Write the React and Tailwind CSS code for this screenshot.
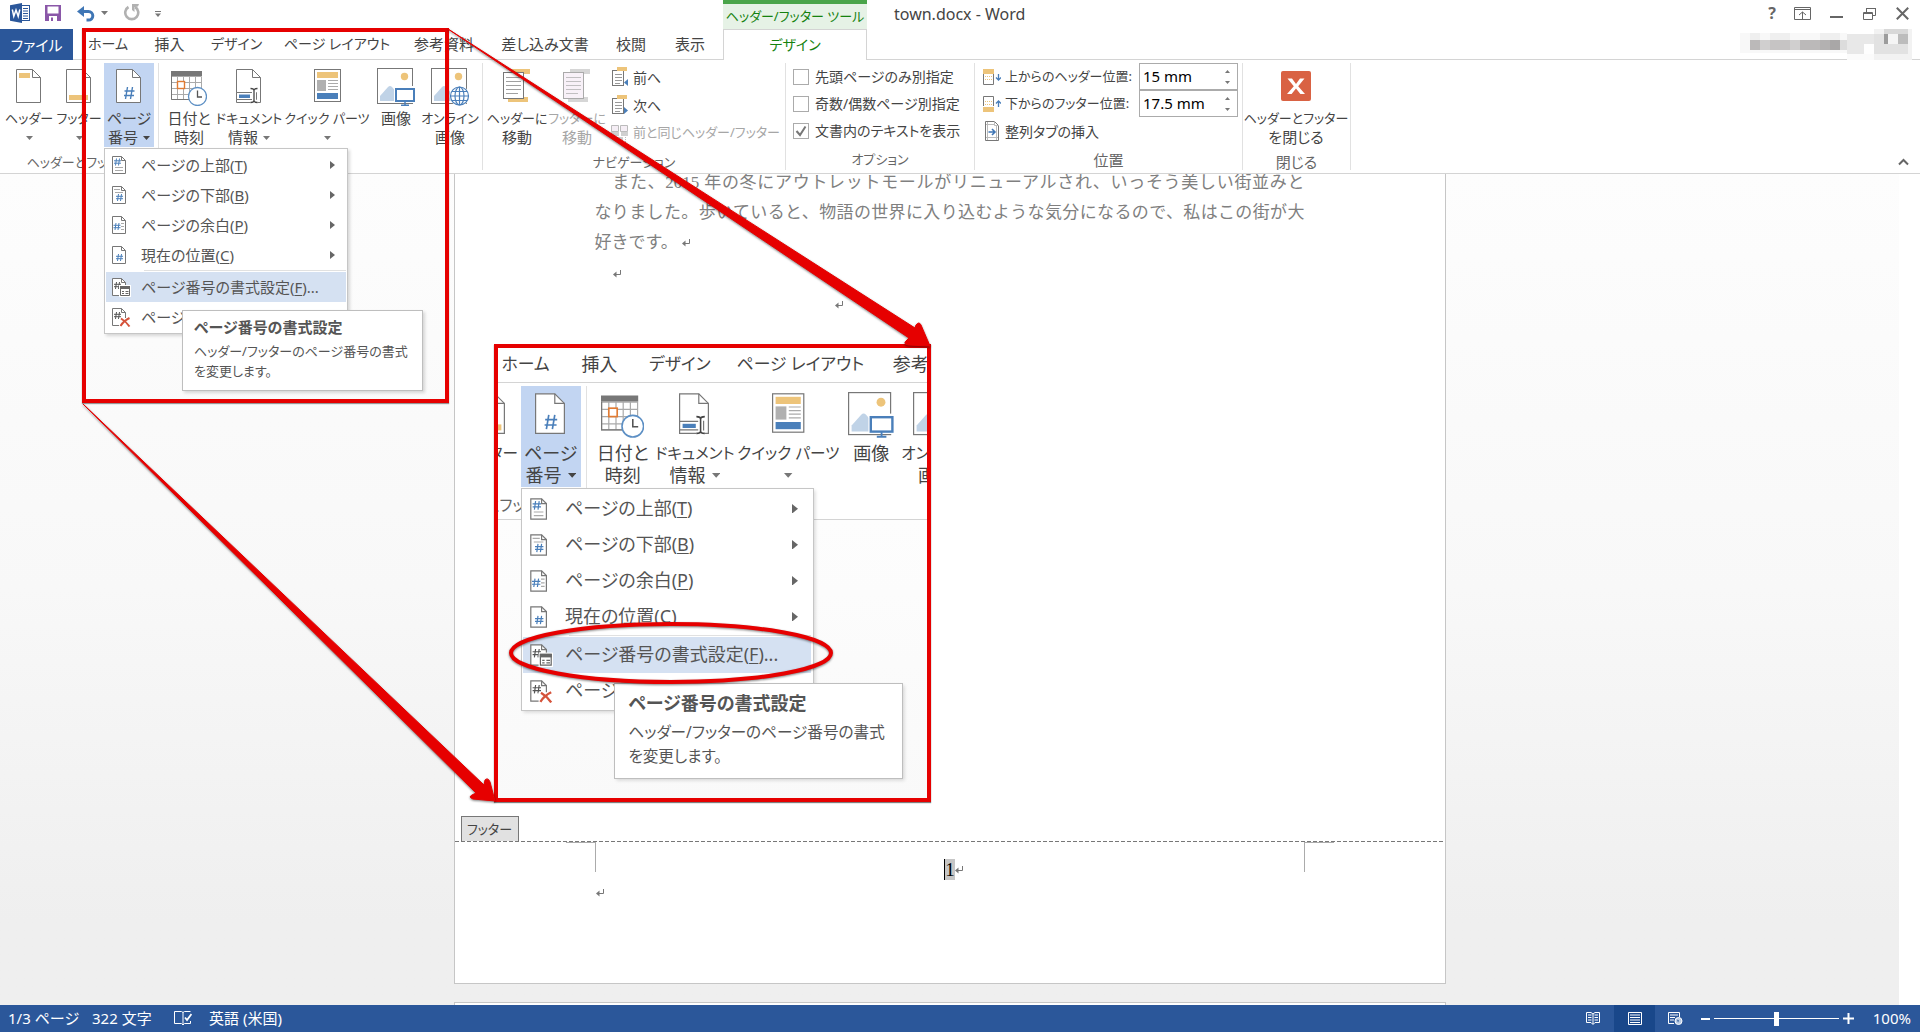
import React from "react";

const Caret = ({ className = "text-[#666]" }) => (
  <svg width="7" height="4" viewBox="0 0 7 4" className={className} aria-hidden="true">
    <path d="M0 0h7L3.5 4z" fill="currentColor" />
  </svg>
);

/* ---------- title bar icons ---------- */
const WordLogo = () => (
  <svg width="20" height="20" viewBox="0 0 20 20" aria-hidden="true">
    <rect x="9" y="2.5" width="10.5" height="15" fill="#fff" stroke="#2b579a" />
    <path d="M13 5.5h5M13 8h5M13 10.500h5M13 13h5M13 15.500h5" stroke="#2b579a" />
    <path d="M0 2.200 12 0v20L0 17.800z" fill="#2b579a" />
    <path d="M2.300 6.500 3.800 13.300 6 7l2.200 6.300L9.800 6.500" fill="none" stroke="#fff" strokeWidth="1.500" />
  </svg>
);
const SaveIcon = () => (
  <svg width="16" height="16" viewBox="0 0 16 16" aria-hidden="true">
    <path d="M0 0h16v16H0z" fill="#8a57a8" />
    <path d="M2.500 1.500h11v7h-11z" fill="#fff" />
    <path d="M4 11h8v5H4z" fill="#fff" />
    <path d="M6 12.500h2V16H6z" fill="#8a57a8" />
  </svg>
);
const UndoIcon = () => (
  <svg width="18" height="16" viewBox="0 0 18 16" aria-hidden="true">
    <path d="M7 0 0 5.500 7 11V7.500" fill="#3f76b5" />
    <path d="M4 5.500h7.500a4.300 4.300 0 0 1 0 8.600H9.500" fill="none" stroke="#3f76b5" strokeWidth="3" />
  </svg>
);
const RedoIcon = () => (
  <svg width="17" height="17" viewBox="0 0 17 17" aria-hidden="true">
    <path d="M5.500 3A6.500 6.500 0 1 0 12 3" fill="none" stroke="#b1b1b1" strokeWidth="2.600" />
    <path d="M9 0h7l-1 2.500-3.500.5V8L9 6z" fill="#b1b1b1" />
  </svg>
);

/* ---------- large ribbon icons ---------- */
const Sheet = ({ children }) => (
  <svg width="26" height="38" viewBox="0 0 26 38" aria-hidden="true">
    <path d="M.5 1.500h16l8 8v25H.5z" fill="#fff" stroke="#777" />
    <path d="M16.500 1.500v8h8" fill="none" stroke="#777" />
    {children}
  </svg>
);
const HeaderIcon = () => <Sheet><path d="M3 5h11v5H3z" fill="#edc47a" /></Sheet>;
const FooterIcon = () => <Sheet><path d="M3 27h19v5H3z" fill="#edc47a" /></Sheet>;
const PageNumberIcon = () => (
  <Sheet><path d="M11.500 19 9.500 31M16.500 19 14.500 31M8.500 23h10M8 27.500h10" stroke="#4a7fba" strokeWidth="1.400" /></Sheet>
);
const DateIcon = () => (
  <svg width="36" height="38" viewBox="0 0 36 38" aria-hidden="true">
    <path d="M.5 8.500h30v23H.5zM6.500 8v23M12.500 8v23M18.500 8v23M24.500 8v23M.5 14.500h30M.5 20.500h30M.5 26.500h30" fill="#fff" stroke="#aaa" />
    <path d="M0 3h31v5H0z" fill="#777" />
    <path d="M.5 8v23.500H19" fill="none" stroke="#777" />
    <rect x="6.500" y="13.500" width="7" height="7" fill="#fff" stroke="#e07b33" strokeWidth="1.400" />
    <circle cx="26.500" cy="28.500" r="9" fill="#fff" stroke="#5c8fc4" strokeWidth="1.300" />
    <path d="M26.500 22.500v6.500H31" fill="none" stroke="#555" strokeWidth="1.300" />
  </svg>
);
const DocInfoIcon = () => (
  <Sheet>
    <path d="M.5 24.500h20v7H.5z" fill="#fff" stroke="#777" />
    <path d="M3 26.500h11v3.500H3z" fill="#4a7fba" />
    <path d="M14.500 20.500q3.500 0 3.500 2v10q0 2-3.500 2M21.500 20.500q-3.500 0-3.500 2v10q0 2 3.500 2" fill="none" stroke="#fff" strokeWidth="4" />
    <path d="M14.500 20.500q3.500 0 3.500 2v10q0 2-3.500 2M21.500 20.500q-3.500 0-3.500 2v10q0 2 3.500 2" fill="none" stroke="#444" strokeWidth="1.300" />
  </Sheet>
);
const QuickPartsIcon = () => (
  <svg width="27" height="38" viewBox="0 0 27 38" aria-hidden="true">
    <rect x=".5" y="1.500" width="26" height="32" fill="#fff" stroke="#777" />
    <path d="M3 4h21v6H3z" fill="#edc47a" />
    <path d="M3 12h9v11H3z" fill="#b0b0b0" />
    <path d="M14 12.500h10M14 15.500h10M14 18.500h10M14 21.500h10" stroke="#aaa" />
    <path d="M3 25h21v6H3z" fill="#4a7fba" />
  </svg>
);
const Picture = ({ children }) => (
  <svg width="39" height="38" viewBox="0 0 39 38" aria-hidden="true">
    <rect x=".5" y=".5" width="35" height="35" fill="#fff" stroke="#777" />
    <circle cx="27.500" cy="8.500" r="3.700" fill="#edc47a" />
    <path d="M3 33V28L11 19q2-2 4 0l8 9v5z" fill="#c0d3e7" />
    {children}
  </svg>
);
const ImageIcon = () => (
  <Picture>
    <path d="M17 18h22v17H17z" fill="#fff" />
    <rect x="19" y="21" width="18" height="12" fill="#fff" stroke="#4a7fba" strokeWidth="2" />
    <path d="M28 33v4M24 37.300h8" stroke="#4a7fba" strokeWidth="1.500" />
  </Picture>
);
const OnlineImageIcon = () => (
  <Picture>
    <circle cx="28.500" cy="28" r="10" fill="#fff" />
    <g fill="none" stroke="#4a7fba" strokeWidth="1.200">
      <circle cx="28.500" cy="28" r="9" />
      <ellipse cx="28.500" cy="28" rx="4.500" ry="9" />
      <path d="M28.500 19v18M19.500 28h18M21 23.500h15M21 32.500h15" />
    </g>
  </Picture>
);
const MoveIcon = ({ paper = "#fff", line = "#777", accent = "#edc47a", flip = false }) => (
  <svg width="28" height="38" viewBox="0 0 28 38" aria-hidden="true">
    <path d={flip ? "M7 1h20v5H7z" : "M9 1h18v5H9z"} fill={accent} />
    <path d="M5 29h20v5H5z" fill={accent} />
    <rect x=".5" y="4.500" width="20" height="26" fill={paper} stroke={line} />
    <path d="M3 9.500h15M3 13.500h15M3 17.500h15M3 21.500h15M3 25.500h12" stroke={line} strokeOpacity=".7" />
  </svg>
);
const CloseHeaderIcon = () => (
  <svg width="30" height="38" viewBox="0 0 30 38" aria-hidden="true">
    <rect y="3" width="30" height="30" rx="2" fill="#d96243" />
    <path d="M6.500 10.500h4.500L15 16l4-5.500h4.500L17.200 18.300 24 26h-4.600L15 20.500 10.600 26H6l6.800-7.700z" fill="#fff" />
  </svg>
);

/* ---------- small icons ---------- */
const StepIcon = ({ next }) => (
  <svg width="18" height="20" viewBox="0 0 18 20" className="shrink-0" aria-hidden="true">
    <rect x="1.500" y="3.500" width="11" height="15" fill="#fff" stroke="#777" />
    <path d="M4 7.500h7M4 10.500h7M4 13.500h7M4 16.500h5" stroke="#999" />
    <path d="M6 0h10v4H6z" fill="#edc47a" />
    <path d={next ? "M13 12v7l4-3.500z" : "M17 12v7l-4-3.500z"} fill="#4a7fba" />
  </svg>
);
const LinkPrevIcon = () => (
  <svg width="18" height="20" viewBox="0 0 18 20" className="shrink-0" aria-hidden="true">
    <path d="M.5 2.500h7v6h-7zM9.500 2.500h7v6h-7z" fill="#f5eef5" stroke="#bbb" />
    <path d="M0 9h8v4H0zM10 9h7v4h-7zM5 14h7v4H5z" fill="#d0d0d0" />
    <path d="M14.500 14v5" stroke="#bbb" strokeDasharray="1 1" />
  </svg>
);
const EdgeIcon = ({ footer }) => (
  <svg width="18" height="18" viewBox="0 0 18 18" className="shrink-0" aria-hidden="true">
    <path d={footer ? "M.5 11V1.500h10V11" : "M.5 6v10.500h10V6"} fill="#fff" stroke="#777" />
    <path d={footer ? "M0 12h11v5H0z" : "M0 1h11v5H0z"} fill="#edc47a" />
    <path d={footer ? "M2 6.500h8M2 9.500h8" : "M2 8.500h8M2 11.500h8"} stroke="#edc47a" strokeDasharray="1 1" />
    <path d={footer ? "M15.500 12V6M13 8.500l2.500-2.500L18 8.500" : "M15.500 6v6M13 9.500l2.500 2.500L18 9.500"} fill="none" stroke="#4a7fba" strokeWidth="1.300" />
  </svg>
);
const AlignTabIcon = () => (
  <svg width="18" height="20" viewBox="0 0 18 20" className="shrink-0" aria-hidden="true">
    <path d="M2.500.5h9l4 4v15h-13z" fill="#fff" stroke="#777" />
    <path d="M11.500.5v4h4M4.500 1v18M13.500 5v14M3 16.500h12M3 3.500h8" fill="none" stroke="#bbb" />
    <path d="M5.500 11h6M9 8l3 3-3 3" fill="none" stroke="#3f76b5" strokeWidth="1.600" />
  </svg>
);

const Hash = ({ x, y, color = "#4a7fba" }) => (
  <path
    d={`M${x + 2.5} ${y}l-1 7M${x + 5.5} ${y}l-1 7M${x} ${y + 2.3}h7M${x} ${y + 4.7}h7`}
    stroke={color}
    fill="none"
  />
);
const MenuIcon = ({ kind }) => (
  <svg width="20" height="20" viewBox="0 0 20 20" aria-hidden="true">
    <path d="M1.500 1.500h9l4 4v13h-13z" fill="#fff" stroke="#777" />
    <path d="M10.500 1.500v4h4" fill="none" stroke="#777" />
    {kind === "top" && <><Hash x={3} y={3.5} /><path d="M4 12.500h8M4 15.500h8" stroke="#aaa" /></>}
    {kind === "bottom" && <><Hash x={5} y={9} /><path d="M3 4.500h6M4 7.500h8" stroke="#aaa" /></>}
    {kind === "margin" && <><Hash x={2.5} y={8} /><path d="M10 8.500h3M10 11.500h3M10 14.500h3" stroke="#aaa" /></>}
    {kind === "current" && <Hash x={5} y={9} />}
    {kind === "format" && (
      <>
        <Hash x={3} y={5} color="#555" />
        <path d="M8 8h12v12H8z" fill="#fff" />
        <path d="M9.500 9.500h9v9h-9z" fill="#fff" stroke="#666" />
        <path d="M9 9h10v3H9z" fill="#666" />
        <path d="M11 14.500h2M14.500 14.500h3M11 16.500h2M14.500 16.500h3" stroke="#666" />
      </>
    )}
    {kind === "remove" && (
      <>
        <Hash x={3} y={5} color="#555" />
        <path d="M8 11h12v9H8z" fill="#fff" />
        <path d="M10 11.500q5 3 8.500 8M18.500 11q-6 3-9 8" fill="none" stroke="#d5533b" strokeWidth="2" />
      </>
    )}
  </svg>
);

const Mark = () => (
  <svg width="8" height="8" viewBox="0 0 8 8" aria-hidden="true" className="shrink-0">
    <path d="M7.500 0v4.500H2" fill="none" stroke="#777" />
    <path d="M3.500 1.500v6L0 4.500z" fill="#777" />
  </svg>
);

/* ---------- ribbon building blocks ---------- */
const Tab = ({ width, kana, children }) => (
  <button role="tab" className={`${width} ${kana ? "text-[14px]" : "text-[15px]"} h-[30px] shrink-0 whitespace-nowrap text-center leading-[30px] text-[#444]`}>
    {children}
  </button>
);

const MainTabs = () => (
  <>
    <button className="mr-[3px] h-[31px] w-[73px] shrink-0 bg-[#2b579a] text-center text-[15px] leading-[30px] text-white">ファイル</button>
    <Tab width="w-[64px]" kana>ホーム</Tab>
    <Tab width="w-[59px]">挿入</Tab>
    <Tab width="w-[75px]" kana>デザイン</Tab>
    <Tab width="w-[126px]" kana>ページ レイアウト</Tab>
    <Tab width="w-[88px]">参考資料</Tab>
  </>
);

const BigButton = ({ width, icon, line1, line2, caret, kana, active, disabled, className = "" }) => (
  <button
    disabled={disabled}
    className={`${width} ${className} ${active ? "bg-[#c2d5f2]" : ""} ${disabled ? "text-[#a6a6a6]" : "text-[#444]"} flex h-[84px] shrink-0 flex-col items-center pt-[5px]`}
  >
    <span className="mb-[3px] flex h-[38px] items-start">{icon}</span>
    <span className={`${kana ? "text-[13px]" : "text-[15px]"} whitespace-nowrap leading-[19px]`}>{line1}</span>
    <span className="flex h-[19px] items-center gap-[5px] whitespace-nowrap text-[15px] leading-[19px]">
      {line2}
      {caret && <Caret className={active ? "text-[#444]" : "text-[#777]"} />}
    </span>
  </button>
);

const Group = ({ label, width, kana, children }) => (
  <section aria-label={label} className={`${width} flex shrink-0 flex-col border-r border-[#e1e1e1]`}>
    <div className="flex h-[84px]">{children}</div>
    <div className={`${kana ? "text-[13px]" : "text-[15px]"} mt-1 text-center leading-[22px] text-[#666]`}>{label}</div>
  </section>
);

const MenuItem = ({ kind, text, accel, tail = "", arrow, active }) => (
  <button
    role="menuitem"
    className={`${active ? "bg-[#d5e1f2]" : ""} flex h-[30px] w-full items-center whitespace-nowrap pl-[5px] pr-[11px] text-left text-[15px] text-[#555]`}
  >
    <MenuIcon kind={kind} />
    <span className="ml-[10px] flex-1">
      {text}(<u className="underline-offset-2">{accel}</u>){tail}
    </span>
    {arrow && (
      <svg width="5" height="8" viewBox="0 0 5 8" aria-hidden="true"><path d="M0 0v8l5-4z" fill="#666" /></svg>
    )}
  </button>
);

const PageNumberMenu = () => (
  <div role="menu" className="absolute left-0 top-[85px] z-10 w-[244px] border border-[#c6c6c6] bg-white px-px pb-px pt-px shadow-[2px_2px_3px_rgba(0,0,0,0.15)]">
    <MenuItem kind="top" text="ページの上部" accel="T" arrow />
    <MenuItem kind="bottom" text="ページの下部" accel="B" arrow />
    <MenuItem kind="margin" text="ページの余白" accel="P" arrow />
    <MenuItem kind="current" text="現在の位置" accel="C" arrow />
    <div className="mb-px ml-[38px] border-t border-[#e1e1e1]" />
    <MenuItem kind="format" text="ページ番号の書式設定" accel="F" tail="..." active />
    <MenuItem kind="remove" text="ページ番号の削除" accel="R" />
    <div role="tooltip" className="absolute left-[77px] top-[161px] w-[241px] border border-[#bebebe] bg-white pb-[9px] pl-[11px] pt-[5px] text-[13px] text-[#555] shadow-[2px_2px_3px_rgba(0,0,0,0.15)]">
      <div className="mb-[3px] whitespace-nowrap text-[15px] font-bold leading-[22px]">ページ番号の書式設定</div>
      <div className="whitespace-nowrap leading-[20px]">ヘッダー/フッターのページ番号の書式<br />を変更します。</div>
    </div>
  </div>
);

const FirstGroups = () => (
  <>
    <Group label="ヘッダーとフッター" width="w-[159px]" kana>
      <BigButton width="w-[50px]" className="ml-1" icon={<HeaderIcon />} line1="ヘッダー" kana caret />
      <BigButton width="w-[50px]" icon={<FooterIcon />} line1="フッター" kana caret />
      <div className="relative">
        <BigButton width="w-[50px]" icon={<PageNumberIcon />} line1="ページ" line2="番号" caret active />
        <PageNumberMenu />
      </div>
    </Group>
    <Group label="挿入" width="w-[324px]">
      <BigButton width="w-[54px]" className="ml-[3px]" icon={<DateIcon />} line1="日付と" line2="時刻" />
      <BigButton width="w-[66px]" icon={<DocInfoIcon />} line1="ドキュメント" line2="情報" kana caret />
      <BigButton width="w-[90px]" icon={<QuickPartsIcon />} line1="クイック パーツ" kana caret />
      <BigButton width="w-[48px]" icon={<ImageIcon />} line1="画像" />
      <BigButton width="w-[60px]" icon={<OnlineImageIcon />} line1="オンライン" line2="画像" kana />
    </Group>
  </>
);

const SmallButton = ({ icon, children, kana, disabled }) => (
  <button disabled={disabled} className={`${disabled ? "text-[#a6a6a6]" : "text-[#444]"} ${kana ? "text-[13px]" : "text-[14px]"} flex h-[28px] items-center gap-[4px] whitespace-nowrap`}>
    {icon}
    {children}
  </button>
);

const Check = ({ children, checked }) => (
  <label className="flex h-[27px] items-center gap-[6px] whitespace-nowrap text-[14px] text-[#444]">
    <span className="relative flex h-4 w-4 shrink-0">
      <input type="checkbox" defaultChecked={checked} className="peer h-4 w-4 appearance-none border border-[#ababab] bg-white" />
      <svg viewBox="0 0 16 16" className="pointer-events-none absolute inset-0 hidden h-4 w-4 peer-checked:block" aria-hidden="true">
        <path d="M3.500 8l3.500 4L12.500 3.500" fill="none" stroke="#777" strokeWidth="2" />
      </svg>
    </span>
    {children}
  </label>
);

const Spin = ({ id, icon, label, value }) => (
  <div className="flex h-[27px] items-center text-[13px] text-[#444]">
    {icon}
    <label htmlFor={id} className="ml-1 flex-1 whitespace-nowrap">{label}</label>
    <div className="flex h-[27px] w-[99px] border border-[#ababab] bg-white">
      <input id={id} defaultValue={value} className="w-[78px] pl-[3px] text-[15px] text-black outline-none" />
      <div className="flex w-[19px] flex-col items-center justify-center gap-[8px]">
        <button aria-label="増やす"><svg className="block" width="5" height="3" viewBox="0 0 5 3"><path d="M0 3h5L2.500 0z" fill="#777" /></svg></button>
        <button aria-label="減らす"><svg className="block" width="5" height="3" viewBox="0 0 5 3"><path d="M0 0h5L2.500 3z" fill="#777" /></svg></button>
      </div>
    </div>
  </div>
);

const TitleBar = () => (
  <header className="flex h-[29px] shrink-0 bg-white">
    <div className="flex w-[723px] items-start pl-[10px] pt-[3px]">
      <WordLogo />
      <button aria-label="上書き保存" className="ml-[15px] mt-[2px]"><SaveIcon /></button>
      <button aria-label="元に戻す" className="ml-[16px] mt-[3px]"><UndoIcon /></button>
      <button aria-label="元に戻す履歴" className="ml-[6px] mt-[8px]"><Caret className="block text-[#777]" /></button>
      <button aria-label="やり直し" className="ml-[15px] mt-[1px]"><RedoIcon /></button>
      <button aria-label="クイック アクセスのカスタマイズ" className="ml-[15px] mt-[8px]">
        <svg width="6" height="6" viewBox="0 0 6 6"><path d="M0 .5h6" stroke="#777" /><path d="M0 2.500h6L3 6z" fill="#777" /></svg>
      </button>
    </div>
    <div className="w-[144px] whitespace-nowrap border-t-4 border-[#4aa54a] bg-[#e6f2e6] text-center text-[13px] leading-[24px] text-[#15820f]">ヘッダー/フッター ツール</div>
    <h1 className="ml-[27px] flex-1 text-[16px] leading-[29px] text-[#444]">town.docx - Word</h1>
    <div className="flex items-center pb-[3px] pr-[11px] text-[#666]">
      <button aria-label="ヘルプ" className="mr-[18px] text-[16px] font-bold leading-[20px]">?</button>
      <button aria-label="リボンの表示オプション" className="mr-[19px]">
        <svg width="17" height="13" viewBox="0 0 17 13" fill="none" stroke="#666"><path d="M.5.5h16v12H.5zM0 2.500h17M8.500 12V5M5 8l3.500-3L12 8" /></svg>
      </button>
      <button aria-label="最小化" className="mr-[20px]"><svg width="13" height="13" viewBox="0 0 13 13"><path d="M0 10h13" stroke="#666" strokeWidth="2" /></svg></button>
      <button aria-label="元のサイズに戻す" className="mr-[20px]">
        <svg width="13" height="13" viewBox="0 0 13 13" fill="none" stroke="#666"><path d="M.5 5.500h9v7h-9zM.5 6.500h9M3.500 5V1.500h9v7H10M3 1.500h10" /></svg>
      </button>
      <button aria-label="閉じる"><svg width="13" height="13" viewBox="0 0 13 13"><path d="M.8.8l11.400 11.400M12.200.8.8 12.200" stroke="#666" strokeWidth="2" /></svg></button>
    </div>
  </header>
);

/* Pixelated account name and avatar */
const Account = () => (
  <svg width="180" height="31" viewBox="0 0 180 31" className="ml-auto mr-[8px] shrink-0" shapeRendering="crispEdges" role="img" aria-label="アカウント">
    <path d="M8 4h107v20H8z" fill="#f8f8f8" />
    <path d="M18 4h10v7H18zM38 4h20v7H38zM88 4h20v7H88z" fill="#efefef" />
    <path d="M18 11h90v10H18z" fill="#c6c4c4" />
    <path d="M18 11h10v10H18zM68 11h20v10H68z" fill="#bbb9b9" />
    <path d="M88 11h10v10H88z" fill="#b3b1b1" />
    <path d="M98 11h10v10H98z" fill="#a9a7a7" />
    <path d="M28 11h10v10H28zM58 11h10v10H58z" fill="#d0cfcf" />
    <path d="M108 11h7v10h-7z" fill="#dcdcdc" />
    <path d="M115 5h27v20h-27z" fill="#e8e8e8" />
    <path d="M115 25h27v6h-27z" fill="#fbfbfb" />
    <path d="M132 15h10v10h-10z" fill="#fefefe" />
    <path d="M142 0h38v31h-38z" fill="#e2e2e2" />
    <path d="M142 0h10v5h-10zM176 0h4v31h-4zM142 25h38v6h-38z" fill="#f2f2f2" />
    <path d="M152 0h24v5h-24z" fill="#d8d8d8" />
    <path d="M166 5h10v10h-10z" fill="#bcbcbc" />
    <path d="M152 5h4v10h-4z" fill="#9c9c9c" />
    <path d="M156 5h10v10h-10z" fill="#f5f5f5" />
  </svg>
);

const TabBar = () => (
  <nav role="tablist" className="flex h-[31px] shrink-0 border-b border-[#d4d4d4] bg-white">
    <MainTabs />
    <Tab width="w-[114px]">差し込み文書</Tab>
    <Tab width="w-[58px]">校閲</Tab>
    <Tab width="w-[60px]">表示</Tab>
    <button role="tab" aria-selected="true" className="ml-[3px] h-[31px] w-[144px] shrink-0 border-x border-t border-[#d4d4d4] bg-white text-[14px] leading-[28px] text-[#15820f]">デザイン</button>
    <Account />
  </nav>
);

const Ribbon = () => (
  <div className="flex h-[114px] shrink-0 border-b border-[#d4d4d4] bg-white pb-[3px] pt-[3px]">
    <FirstGroups />
    <Group label="ナビゲーション" width="w-[303px]" kana>
      <BigButton width="w-[62px]" className="ml-[3px]" icon={<MoveIcon />} line1="ヘッダーに" line2="移動" kana />
      <BigButton width="w-[58px]" icon={<MoveIcon flip paper="#f8f1f8" line="#aaa" accent="#d6d6d6" />} line1="フッターに" line2="移動" kana disabled />
      <div className="ml-[5px] flex flex-col">
        <SmallButton icon={<StepIcon />}>前へ</SmallButton>
        <SmallButton icon={<StepIcon next />}>次へ</SmallButton>
        <SmallButton icon={<LinkPrevIcon />} kana disabled>前と同じヘッダー/フッター</SmallButton>
      </div>
    </Group>
    <Group label="オプション" width="w-[189px]" kana>
      <div className="ml-[7px]">
        <Check>先頭ページのみ別指定</Check>
        <Check>奇数/偶数ページ別指定</Check>
        <Check checked>文書内のテキストを表示</Check>
      </div>
    </Group>
    <Group label="位置" width="w-[268px]">
      <div className="ml-[8px] w-[255px]">
        <Spin id="header-pos" icon={<EdgeIcon />} label="上からのヘッダー位置:" value="15 mm" />
        <Spin id="footer-pos" icon={<EdgeIcon footer />} label="下からのフッター位置:" value="17.5 mm" />
        <SmallButton icon={<AlignTabIcon />}>整列タブの挿入</SmallButton>
      </div>
    </Group>
    <Group label="閉じる" width="w-[108px]">
      <BigButton width="w-[106px]" icon={<CloseHeaderIcon />} line1="ヘッダーとフッター" line2="を閉じる" kana />
    </Group>
    <button aria-label="リボンを折りたたむ" className="ml-auto mr-[11px] self-end pb-[4px]">
      <svg width="11" height="8" viewBox="0 0 11 8"><path d="M1 6.500l4.500-4.500L10 6.500" fill="none" stroke="#666" strokeWidth="2" /></svg>
    </button>
  </div>
);

const Document = () => (
  <main className="flex min-h-0 flex-1 overflow-hidden bg-white">
    <div className="flex flex-1 flex-col items-center bg-linear-to-b from-[#fdfdfd] via-[#f8f8f8] via-50% to-[#efefef] to-90%">
      <article className="w-[992px] shrink-0 border-x border-b border-[#c6c6c6] bg-white">
        <div className="flex h-[667px] flex-col overflow-hidden">
          <div className="-mt-[6px] px-[140px] font-['Liberation_Serif','Noto_Sans_CJK_JP',serif] text-[17px] leading-[30px] text-[#808080] [font-feature-settings:normal]">
            <p className="whitespace-nowrap [text-align-last:justify]">　また、2015 年の冬にアウトレットモールがリニューアルされ、いっそう美しい街並みと</p>
            <p className="whitespace-nowrap [text-align-last:justify]">なりました。歩いていると、物語の世界に入り込むような気分になるので、私はこの街が大</p>
            <p className="flex items-center gap-1">好きです。<Mark /></p>
            <p className="flex h-[32px] items-center pl-[18px]"><Mark /></p>
            <p className="flex h-[30px] items-center pl-[240px]"><Mark /></p>
          </div>
          <div className="ml-[6px] mt-auto h-[25px] w-[58px] border border-b-0 border-[#777] bg-[#e1e1e1] text-center text-[13px] leading-[24px] text-[#444]">フッター</div>
        </div>
        <div className="h-px bg-[repeating-linear-gradient(90deg,#777_0_4px,transparent_4px_6px)]" />
        <footer className="h-[141px]">
          <div className="flex justify-between px-[111px]">
            <div className="h-[30px] w-[30px] border-r border-t border-[#ababab]" />
            <div className="flex items-center pl-2 pt-[17px]">
              <span className="h-[21px] border-l border-black bg-[#c6c6c6] font-['Liberation_Serif',serif] text-[19px] leading-[21px] text-black">1</span>
              <Mark />
            </div>
            <div className="h-[30px] w-[30px] border-l border-t border-[#ababab]" />
          </div>
          <div className="pl-[141px] pt-[9px]"><Mark /></div>
        </footer>
      </article>
      <div className="mt-[18px] w-[992px] flex-1 border-x border-t border-[#c6c6c6] bg-white" />
    </div>
    <div className="w-[21px] shrink-0 bg-white" />
  </main>
);

const StatusBar = () => (
  <footer className="flex h-[27px] shrink-0 items-center bg-[#2b579a] text-[15px] text-white">
    <span className="ml-[8px] w-[84px]">1/3 ページ</span>
    <span className="w-[82px]">322 文字</span>
    <button aria-label="文章校正" className="w-[35px]">
      <svg width="18" height="15" viewBox="0 0 18 15" fill="none" stroke="#fff"><path d="M9 13.500V1.500L7.500.5h-7v12h7L9 14l1.500-1.500h6V10M9 1.500l1.500-1h6" /><path d="M11 6.500l2 2.500 4.500-6" strokeWidth="1.800" /></svg>
    </button>
    <span>英語 (米国)</span>
    <div className="ml-auto flex h-full items-center">
      <button aria-label="閲覧モード" className="mr-[14px]">
        <svg width="14" height="13" viewBox="0 0 14 13" fill="none" stroke="#fff"><path d="M.5.500H5L7 2 9 .5h4.500v10H9L7 12.500 5 10.500H.5zM7 2v10M2 3h3.500M2 5.500h3.500M2 8h3.500M8.500 3H12M8.500 5.500H12M8.500 8H12" /></svg>
      </button>
      <button aria-label="印刷レイアウト" className="flex h-full w-[41px] items-center justify-center bg-[#19478a]">
        <svg width="14" height="13" viewBox="0 0 14 13" fill="none" stroke="#fff"><path d="M.5.500h13v12H.5zM2 3h10M2 5.500h10M2 8h10M2 10.500h10" /></svg>
      </button>
      <button aria-label="Web レイアウト" className="ml-[13px]">
        <svg width="15" height="13" viewBox="0 0 15 13" fill="none" stroke="#fff"><path d="M6 11.500H.5V.500h11V5M2 3h8M2 5.500h5M2 8h4" /><circle cx="10.500" cy="9" r="3.500" fill="#b9cbe4" /><path d="M9 7.500l2 1-1 2z" fill="#2b579a" stroke="none" /></svg>
      </button>
      <button aria-label="縮小" className="ml-[18px]"><svg width="9" height="10" viewBox="0 0 9 10"><path d="M0 5h9" stroke="#fff" strokeWidth="2" /></svg></button>
      <input
        type="range"
        aria-label="ズーム"
        defaultValue="50"
        className="mx-[4px] h-[14px] w-[125px] appearance-none bg-[linear-gradient(#fff,#fff)] bg-[length:100%_1px] bg-center bg-no-repeat [&::-webkit-slider-thumb]:h-[14px] [&::-webkit-slider-thumb]:w-[5px] [&::-webkit-slider-thumb]:appearance-none [&::-webkit-slider-thumb]:bg-white"
      />
      <button aria-label="拡大"><svg width="11" height="11" viewBox="0 0 11 11"><path d="M0 5.500h11M5.500 0v11" stroke="#fff" strokeWidth="2" /></svg></button>
      <span className="ml-[16px] mr-[9px] w-[41px] text-right">100%</span>
    </div>
  </footer>
);

/* Magnified view of the framed ribbon area */
const Magnified = () => (
  <div className="absolute left-[494px] top-[344px] h-[458px] w-[437px] overflow-hidden border-4 border-[#e60000] bg-[#fcfcfc] shadow-[0_1px_1px_rgba(0,0,0,0.5)]">
    <div className="-ml-[85px] -mt-[2px] w-[483px] [zoom:1.2]">
      <div className="flex h-[31px] border-b border-[#d4d4d4] bg-white"><MainTabs /></div>
      <div className="flex h-[114px] border-b border-[#d4d4d4] bg-white py-[3px]"><FirstGroups /></div>
      <div className="h-[240px] bg-linear-to-b from-[#fdfdfd] to-[#f9f9f9]" />
    </div>
  </div>
);

const Annotations = () => (
  <div className="pointer-events-none absolute inset-0 z-20">
    <div className="absolute left-[82px] top-[28px] h-[375px] w-[367px] border-4 border-[#e60000] shadow-[0_1px_1px_rgba(0,0,0,0.4)]" />
    <svg width="1920" height="1032" viewBox="0 0 1920 1032" className="absolute left-0 top-0 drop-shadow-[0_1px_1px_rgba(0,0,0,0.5)]" aria-hidden="true">
      <g fill="#e60000" stroke="#e60000" strokeLinejoin="round">
        <path d="M448 29 915 328 916 325Q919 321 921 325L930 346 908 345Q903 344 906 341L909 338z" />
        <path d="M83 404 484 785 485 780Q488 777 490 782L495 801 473 799Q468 797 472 795L476 793z" />
      </g>
      <ellipse cx="671" cy="653" rx="160" ry="29" fill="none" stroke="#e60000" strokeWidth="4" />
    </svg>
  </div>
);

export default function App() {
  return (
    <div className="relative flex h-screen flex-col overflow-hidden bg-white font-['Noto_Sans','Noto_Sans_CJK_JP',sans-serif] [font-feature-settings:'palt']">
      <TitleBar />
      <TabBar />
      <Ribbon />
      <Document />
      <StatusBar />
      <Magnified />
      <Annotations />
    </div>
  );
}
